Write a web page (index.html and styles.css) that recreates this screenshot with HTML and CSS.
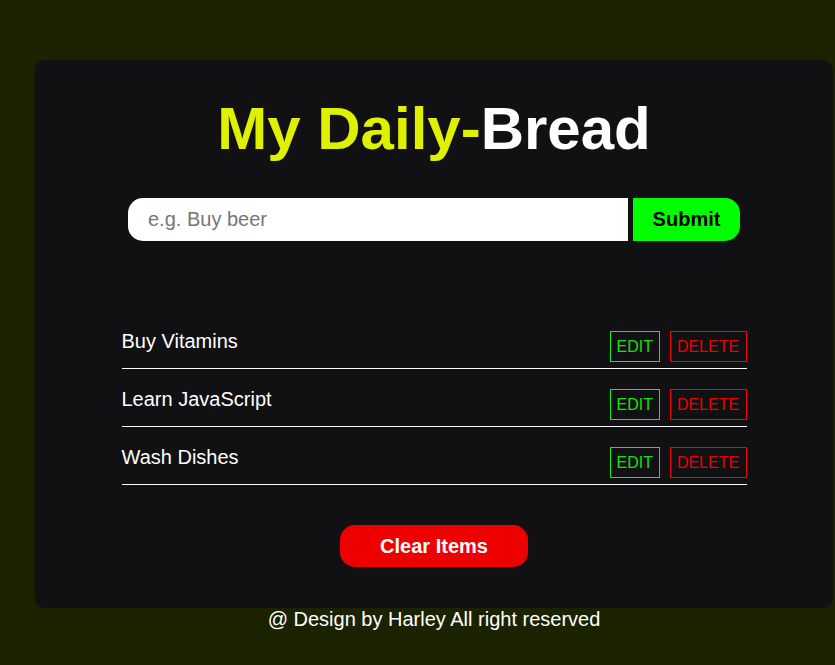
FILE: index.html
```html
<!DOCTYPE html>
<html lang="en">
<head>
<meta charset="utf-8">
<title>My Daily-Bread</title>
<link rel="stylesheet" href="styles.css">
</head>
<body>
<div class="wrap">
  <main class="card">
    <h1 class="title"><span class="accent">My Daily-</span>Bread</h1>
    <form class="form">
      <input class="input" type="text" placeholder="e.g. Buy beer">
      <button class="submit" type="button">Submit</button>
    </form>
    <ul class="list">
      <li class="item">
        <span class="item-text">Buy Vitamins</span>
        <div class="actions">
          <button class="btn edit" type="button">EDIT</button>
          <button class="btn delete" type="button">DELETE</button>
        </div>
      </li>
      <li class="item">
        <span class="item-text">Learn JavaScript</span>
        <div class="actions">
          <button class="btn edit" type="button">EDIT</button>
          <button class="btn delete" type="button">DELETE</button>
        </div>
      </li>
      <li class="item">
        <span class="item-text">Wash Dishes</span>
        <div class="actions">
          <button class="btn edit" type="button">EDIT</button>
          <button class="btn delete" type="button">DELETE</button>
        </div>
      </li>
    </ul>
    <div class="clear-row">
      <button class="clear" type="button">Clear Items</button>
    </div>
  </main>
  <footer class="footer">@ Design by Harley All right reserved</footer>
</div>
</body>
</html>
```

FILE: styles.css
```css
* { box-sizing: border-box; }

html, body {
  margin: 0;
  padding: 0;
}

body {
  background: #1b2200;
  font-family: "Liberation Sans", Arial, sans-serif;
  color: #fff;
  height: 665px;
  overflow: hidden;
}

.wrap {
  margin-left: 35px;
  padding-top: 60px;
  width: 798px;
}

.card {
  background: #111113;
  border-radius: 10px;
  height: 548px;
  padding-top: 34px;
  display: flex;
  flex-direction: column;
  align-items: center;
}

.title {
  margin: 0;
  font-size: 60px;
  line-height: 69px;
  font-weight: bold;
  color: #fff;
}

.accent { color: #dff000; }

.form {
  margin-top: 35px;
  display: flex;
  gap: 5px;
}

.input {
  width: 500px;
  height: 43px;
  border: none;
  outline: none;
  border-radius: 15px 0 0 15px;
  padding: 0 20px;
  font-family: "Liberation Sans", Arial, sans-serif;
  font-size: 20px;
  color: #333;
  background: #fff;
}

.input::placeholder { color: #767676; }

.submit {
  width: 107px;
  height: 43px;
  border: none;
  border-radius: 0 15px 15px 0;
  background: #00ff00;
  color: #000;
  font-family: "Liberation Sans", Arial, sans-serif;
  font-weight: bold;
  font-size: 20px;
  padding: 0;
}

.list {
  list-style: none;
  margin: 70px 0 0;
  padding: 0;
  width: 625px;
}

.item {
  display: flex;
  justify-content: space-between;
  align-items: flex-start;
  padding: 20px 0 6px;
  border-bottom: 1px solid #fff;
}

.item-text {
  font-size: 20px;
  line-height: 23px;
  margin-top: -1px;
}

.actions {
  display: flex;
  gap: 10px;
}

.btn {
  height: 31px;
  background: transparent;
  font-family: "Liberation Sans", Arial, sans-serif;
  font-size: 16px;
  padding: 0 6px;
  border-radius: 0;
}

.edit {
  border: 1px solid #11ee11;
  color: #11e011;
  width: 50px;
}

.delete {
  border: 1px solid #ff0000;
  color: #ee0000;
  width: 77px;
}

.clear-row {
  margin-top: 40px;
}

.clear {
  width: 188px;
  height: 42px;
  border: none;
  border-radius: 15px;
  background: #ee0000;
  color: #fff;
  font-family: "Liberation Sans", Arial, sans-serif;
  font-weight: bold;
  font-size: 20px;
  padding: 0;
}

.footer {
  text-align: center;
  font-size: 20px;
  line-height: 23px;
}
```
